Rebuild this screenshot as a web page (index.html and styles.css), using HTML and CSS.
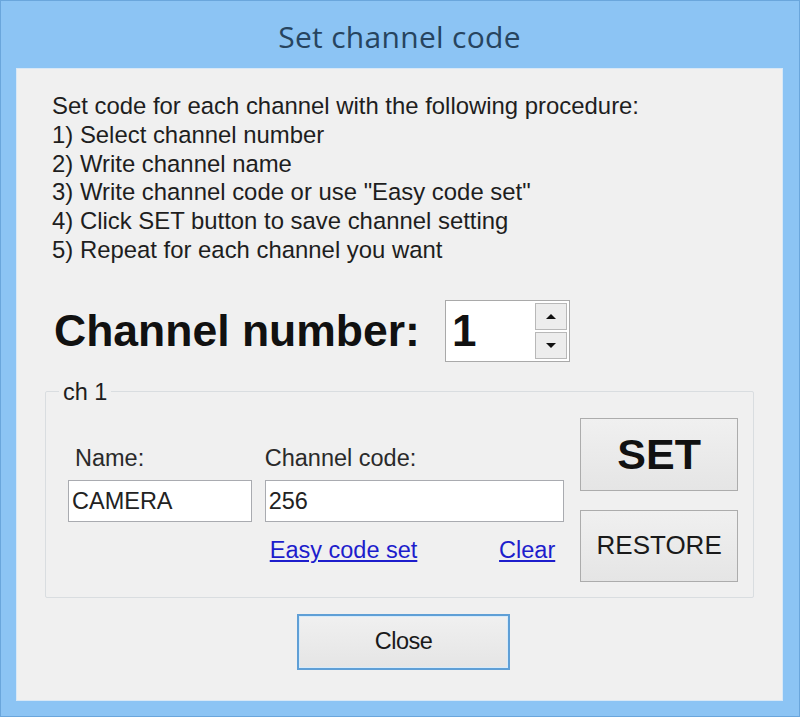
FILE: index.html
```html
<!DOCTYPE html>
<html>
<head>
<meta charset="utf-8">
<link rel="stylesheet" href="styles.css">
</head>
<body>
<div class="window">
  <div class="titlebar">Set channel code</div>
  <div class="client">
    <div class="instructions">
      <div>Set code for each channel with the following procedure:</div>
      <div>1) Select channel number</div>
      <div>2) Write channel name</div>
      <div>3) Write channel code or use "Easy code set"</div>
      <div>4) Click SET button to save channel setting</div>
      <div>5) Repeat for each channel you want</div>
    </div>
    <div class="channel-row">
      <span class="channel-label">Channel number:</span>
      <div class="spin">
        <span class="spin-value">1</span>
        <div class="spin-buttons">
          <div class="spin-btn"><span class="arrow-up"></span></div>
          <div class="spin-btn"><span class="arrow-down"></span></div>
        </div>
      </div>
    </div>
    <fieldset class="group">
      <legend>ch 1</legend>
      <div class="group-body">
        <div class="field name-field">
          <div class="label">Name:</div>
          <div class="input">CAMERA</div>
        </div>
        <div class="field code-field">
          <div class="label">Channel code:</div>
          <div class="input">256</div>
          <div class="links">
            <a class="link" href="#">Easy code set</a>
            <a class="link" href="#">Clear</a>
          </div>
        </div>
        <div class="buttons">
          <div class="btn btn-set">SET</div>
          <div class="btn btn-restore">RESTORE</div>
        </div>
      </div>
    </fieldset>
    <div class="footer">
      <div class="btn btn-close">Close</div>
    </div>
  </div>
</div>
</body>
</html>
```
FILE: styles.css
```css
html, body {
  margin: 0;
  padding: 0;
}
body {
  width: 800px;
  height: 717px;
  overflow: hidden;
  font-family: "Liberation Sans", Arial, sans-serif;
  color: #222;
}
.window {
  box-sizing: border-box;
  width: 800px;
  height: 717px;
  background: #8cc4f4;
  border: 1px solid #6aa6dc;
  padding: 0 16px 15px 15px;
  display: flex;
  flex-direction: column;
}
.titlebar {
  height: 67px;
  display: flex;
  align-items: center;
  justify-content: center;
  font-family: "Open Sans", "Noto Sans", sans-serif;
  font-size: 30px;
  letter-spacing: 0.3px;
  color: #27445f;
  padding-top: 3px;
  box-sizing: border-box;
}
.client {
  flex: 1;
  background: #f0f0f0;
  border: 1px solid #d8e8f6;
  display: flex;
  flex-direction: column;
  padding-top: 23px;
}
.instructions {
  margin-left: 35px;
  font-size: 23.9px;
  line-height: 28.8px;
  color: #1e1e1e;
}
.channel-row {
  display: flex;
  align-items: center;
  margin-top: 35px;
  margin-left: 37px;
}
.channel-label {
  font-size: 44.5px;
  font-weight: bold;
  color: #111;
}
.spin {
  margin-left: 25px;
  width: 125px;
  height: 62px;
  box-sizing: border-box;
  border: 1px solid #a9a9a9;
  background: #fff;
  display: flex;
  align-items: stretch;
}
.spin-value {
  flex: 1;
  font-size: 44px;
  font-weight: bold;
  line-height: 60px;
  padding-left: 6px;
  color: #111;
}
.spin-buttons {
  width: 32px;
  display: flex;
  flex-direction: column;
  padding: 2px 2px 2px 0;
  gap: 2px;
}
.spin-btn {
  flex: 1;
  border: 1px solid #b8b8b8;
  background: #ededed;
  display: flex;
  align-items: center;
  justify-content: center;
}
.arrow-up {
  width: 0;
  height: 0;
  border-left: 5px solid transparent;
  border-right: 5px solid transparent;
  border-bottom: 5px solid #111;
}
.arrow-down {
  width: 0;
  height: 0;
  border-left: 5px solid transparent;
  border-right: 5px solid transparent;
  border-top: 5px solid #111;
}
.group {
  margin: 16px 28px 0 28px;
  padding: 12px 15px 15px 22px;
  border: 1px solid #d9dde0;
  border-radius: 2px;
  min-width: 0;
}
.group legend {
  font-size: 23.5px;
  line-height: 28px;
  padding: 0 4px;
  margin-left: -9px;
  color: #1e1e1e;
}
.group-body {
  display: flex;
  align-items: flex-start;
}
.field {
  padding-top: 26px;
}
.label {
  font-size: 23.5px;
  line-height: 28px;
  color: #2a2a2a;
}
.name-field {
  width: 184px;
}
.name-field .label {
  padding-left: 7px;
}
.code-field {
  width: 300px;
  margin-left: 13px;
}
.input {
  box-sizing: border-box;
  height: 42px;
  margin-top: 8px;
  border: 1px solid #a9abb0;
  background: #fff;
  font-size: 23.5px;
  line-height: 40px;
  padding-left: 3px;
  color: #222;
}
.links {
  display: flex;
  justify-content: space-between;
  margin-top: 14px;
  padding: 0 9px 0 5px;
  font-size: 23.5px;
  line-height: 28px;
}
.link {
  color: #1d1dcc;
  text-decoration: underline;
}
.buttons {
  margin-left: 16px;
  width: 158px;
  display: flex;
  flex-direction: column;
  gap: 19px;
}
.btn {
  box-sizing: border-box;
  border: 1px solid #acacac;
  background: linear-gradient(#f0f0f0, #e5e5e5);
  display: flex;
  align-items: center;
  justify-content: center;
  color: #1a1a1a;
}
.btn-set {
  height: 73px;
  font-size: 43px;
  font-weight: bold;
  color: #111;
}
.btn-restore {
  height: 72px;
  font-size: 26px;
}
.footer {
  display: flex;
  justify-content: center;
  margin-top: 16px;
  padding-left: 8px;
}
.btn-close {
  width: 213px;
  height: 56px;
  border: 2px solid #5f9fd6;
  box-shadow: inset 0 0 0 1px #d6ebfb;
  font-size: 23.5px;
  letter-spacing: -0.5px;
}
```
